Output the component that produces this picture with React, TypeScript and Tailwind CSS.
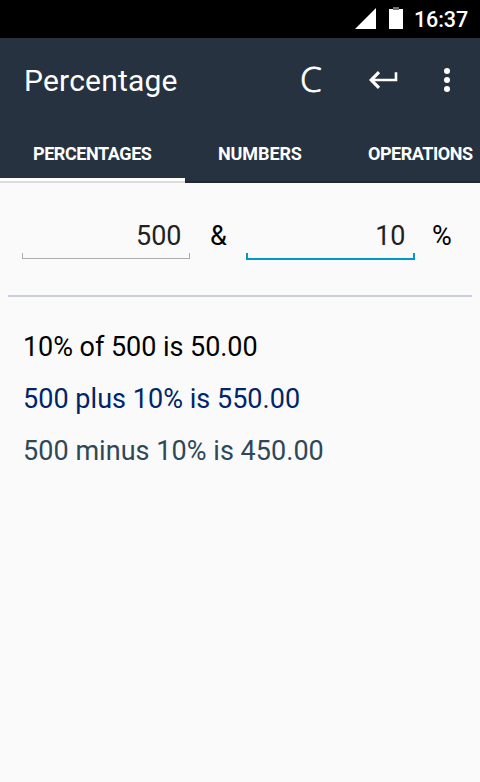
import React from "react";

function StatusBar() {
  return (
    <div className="flex h-[38px] items-start bg-black pl-[355px] text-white">
      <svg className="mt-2 h-[21px] w-[21px] shrink-0" viewBox="0 0 21 21" fill="#fff">
        <path d="M0 21 21 0V21Z" />
      </svg>
      <svg className="mt-[7px] ml-[13px] h-[22px] w-[14px] shrink-0" viewBox="0 0 14 22">
        <path d="M4 0h6v3H4z" fill="#6b7275" />
        <path d="M0 2h4v1h6V2h4v20H0z" fill="#fff" />
      </svg>
      <span className="mt-[7px] ml-[11px] text-[21.5px] leading-[26px] font-medium tracking-[-0.1px] whitespace-nowrap">16:37</span>
    </div>
  );
}

function AppBar() {
  return (
    <div className="flex h-[84px] items-center bg-[#263240] pl-6 text-white">
      <h1 className="w-[276px] pt-[2px] text-[30px] leading-9 font-normal tracking-[0.2px]">Percentage</h1>
      <span className="w-[23px] pb-[2px] font-['Open_Sans',sans-serif] text-[35px] leading-10 font-light [-webkit-text-stroke:0.8px_#fff]">C</span>
      <svg className="ml-[46px] h-[18px] w-[29px] shrink-0" viewBox="0 0 29 18" fill="none" stroke="#fff" strokeWidth="2.6">
        <path d="M10 1.2 2.2 9 10 16.8" strokeWidth="3.2" />
        <path d="M2 9H27V1.2" />
      </svg>
      <svg className="ml-[46px] h-6 w-[6px] shrink-0" viewBox="0 0 6 24" fill="#fff">
        <circle cx="3" cy="3" r="3" />
        <circle cx="3" cy="12" r="3" />
        <circle cx="3" cy="21" r="3" />
      </svg>
    </div>
  );
}

function Tabs() {
  return (
    <nav className="flex h-[61px] overflow-hidden bg-[#263240] text-[18px] font-bold whitespace-nowrap text-white">
      <div className="flex w-[185px] shrink-0 flex-col">
        <span className="h-14 pt-[20px] pl-[33px] leading-6 tracking-[-0.43px]">PERCENTAGES</span>
        <span className="h-[3px] bg-white" />
        <span className="h-[2px] bg-[#dcdcdc]" />
      </div>
      <div className="flex grow border-b-2 border-[#1f2935]">
        <span className="w-[150px] shrink-0 pt-[20px] pl-[33px] leading-6 tracking-[-0.1px]">NUMBERS</span>
        <span className="shrink-0 pt-[20px] pl-[33px] leading-6 tracking-[-0.47px]">OPERATIONS</span>
      </div>
    </nav>
  );
}

function Field({ value, focused = false }: { value: string; focused?: boolean }) {
  return (
    <div className="flex w-[170px] flex-col">
      <span className="h-[33px] pr-[10.5px] text-right text-[27px] leading-8 text-[#222]">{value}</span>
      <span
        className={
          focused
            ? "h-[7px] w-[169px] border-x-2 border-b-2 border-[#0099cc]"
            : "h-[6px] w-[168px] border-x border-b border-[#adadad]"
        }
      />
    </div>
  );
}

export default function App() {
  return (
    <div className="h-[782px] w-[480px] overflow-hidden bg-[#fafafa] font-['Roboto',sans-serif]">
      <StatusBar />
      <AppBar />
      <Tabs />
      <section className="flex h-28 pt-[37px] pl-[22px] text-[27px] leading-8 text-black">
        <Field value="500" />
        <span className="w-[54px] pl-[18px]">&amp;</span>
        <Field value="10" focused />
        <span className="pl-4">%</span>
      </section>
      <div className="mx-2 h-[2px] bg-[#cacdda]" />
      <main className="flex flex-col pt-[24px] pl-[23px] text-[27px] leading-[52px] whitespace-nowrap">
        <p className="tracking-[-0.05px] text-black">10% of 500 is 50.00</p>
        <p className="tracking-[0.03px] text-[#002569]">500 plus 10% is 550.00</p>
        <p className="tracking-[0.04px] text-[#2f4858]">500 minus 10% is 450.00</p>
      </main>
    </div>
  );
}
